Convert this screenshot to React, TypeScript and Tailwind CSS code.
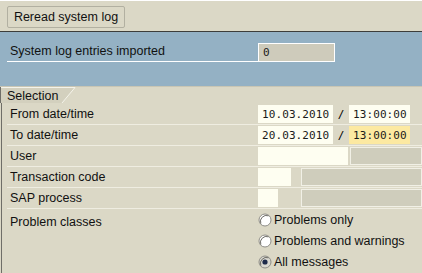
import React from "react";

const mono = { fontFamily: '"DejaVu Sans Mono", "Liberation Mono", monospace' };

const Field = ({ w, value, tone = "cream" }: { w: string; value?: string; tone?: "cream" | "yellow" | "gray" }) => {
  const toneCls =
    tone === "yellow"
      ? "bg-[#fce9a1]"
      : tone === "gray"
      ? "bg-[#cfcdbc] border border-[#f1f0e6]"
      : "bg-[#fefef1]";
  return (
    <div
      className={`${w} ${toneCls} h-[18px] flex items-center pl-[4px] text-[11px] tracking-[0.1px] text-[#1a1a1a]`}
      style={mono}
    >
      {value}
    </div>
  );
};

const Row = ({ label, children }: { label: string; children?: React.ReactNode }) => (
  <div className="flex items-center h-[21px] border-b border-[#efede1]">
    <div className="w-[251px] pl-[3px] pt-[1px] text-[#111]">{label}</div>
    <div className="flex-1 flex items-center">{children}</div>
  </div>
);

const Radio = ({ label, checked }: { label: string; checked?: boolean }) => (
  <div className="flex items-center h-[21px] pl-[251px]">
    <svg width="14" height="14" viewBox="0 0 14 14" className="mr-[2px]">
      <circle cx="7" cy="7" r="6" fill={checked ? "#d9d8d0" : "#ffffff"} stroke="#8e8d87" strokeWidth="1" />
      <path d="M2.8 10.5 A6 6 0 0 1 10.5 2.8" fill="none" stroke="#6d6c66" strokeWidth="1" />
      {checked && <circle cx="7" cy="7" r="2.6" fill="#1d2a4a" />}
    </svg>
    <span className="text-[#111] pt-[1px]">{label}</span>
  </div>
);

export default function App() {
  return (
    <div
      className="w-[422px] h-[273px] overflow-hidden bg-[#dbd8c6] text-[12.5px] leading-none"
      style={{ fontFamily: '"Liberation Sans", Arial, sans-serif' }}
    >
      <div className="border-t border-white">
        <div className="h-[30px] px-[7px] pt-[5px]">
          <button className="w-[118px] h-[22px] border border-[#b2b0a1] rounded-[2px] bg-[#dbd8c6] text-[#111] text-[12.5px]">
            Reread system log
          </button>
        </div>
        <div className="h-[1px] bg-[#3d3d3a]" />
        <div className="h-[54px] bg-[#94b1c4] pt-[11px]">
          <div className="flex items-end">
            <div className="ml-[7px] w-[251px] pl-[3px] pb-[4px] border-b border-white text-[#111]">
              System log entries imported
            </div>
            <div
              className="w-[77px] h-[19px] border border-white bg-[#cecbbb] flex items-center pl-[4px] text-[11px] text-[#1a1a1a]"
              style={mono}
            >
              0
            </div>
          </div>
        </div>
        <div className="h-[1px] bg-[#c9c6b4]" />
        <div className="relative h-[16px]">
          <svg width="76" height="16" className="absolute left-0 top-0">
            <polygon points="0,0 75,0 62,16 0,16" fill="#d3d0be" />
            <polyline points="0.5,16 0.5,0.5 75,0.5 62,16" fill="none" stroke="#f4f3ea" strokeWidth="1" />
            <line x1="0.5" y1="0" x2="0.5" y2="16" stroke="#6f6e68" />
          </svg>
          <span className="absolute left-[7px] top-[3px] text-[#111]">Selection</span>
        </div>
        <div className="ml-[1px] border-l border-[#6f6e68] h-[200px] pt-[1px]">
          <div className="ml-[5px]">
            <Row label="From date/time">
              <Field w="w-[75px]" value="10.03.2010" />
              <span className="w-[16px] text-center text-[11px]" style={mono}>/</span>
              <Field w="w-[61px]" value="13:00:00" />
            </Row>
            <Row label="To date/time">
              <Field w="w-[75px]" value="20.03.2010" />
              <span className="w-[16px] text-center text-[11px]" style={mono}>/</span>
              <Field w="w-[61px]" value="13:00:00" tone="yellow" />
            </Row>
            <Row label="User">
              <Field w="w-[90px]" />
              <div className="w-[2px]" />
              <Field w="flex-1" tone="gray" />
            </Row>
            <Row label="Transaction code">
              <Field w="w-[33px]" />
              <div className="w-[10px]" />
              <Field w="flex-1" tone="gray" />
            </Row>
            <Row label="SAP process">
              <Field w="w-[20px]" />
              <div className="w-[23px]" />
              <Field w="flex-1" tone="gray" />
            </Row>
            <div className="relative">
              <div className="absolute left-[3px] top-[7px] text-[#111]">Problem classes</div>
              <Radio label="Problems only" />
              <Radio label="Problems and warnings" />
              <Radio label="All messages" checked />
            </div>
          </div>
        </div>
      </div>
    </div>
  );
}
